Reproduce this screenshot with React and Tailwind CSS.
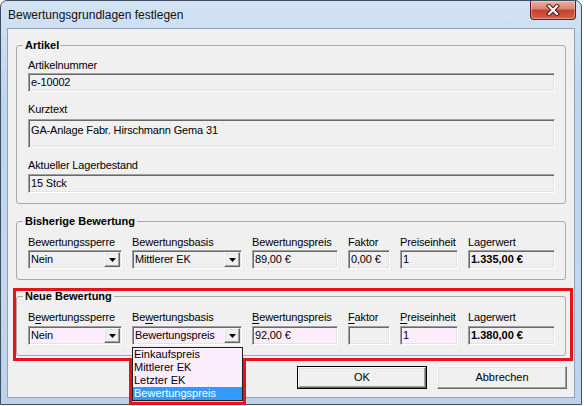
import React from 'react';

const sunken =
  'border border-t-[#a0a0a0] border-l-[#a0a0a0] border-r-white border-b-white shadow-[inset_1px_1px_0_#696969,inset_-1px_-1px_0_#e3e3e3]';
const raised =
  'border border-t-white border-l-white border-r-[#696969] border-b-[#696969] shadow-[inset_-1px_-1px_0_#a0a0a0,inset_1px_1px_0_#e3e3e3]';
const gray = 'bg-[#f0f0f0]';
const pink = 'bg-[#fdeefd]';

function Label({ children, className = '' }) {
  return <div className={`h-[14px] leading-[14px] whitespace-nowrap ${className}`}>{children}</div>;
}

function Box({ children, className = '', bg = gray, h = 'h-[19px] items-center' }) {
  return (
    <div className={`${sunken} ${bg} ${h} flex pl-[2px] whitespace-nowrap overflow-hidden ${className}`}>
      {children}
    </div>
  );
}

function Arrow() {
  return (
    <div className={`${raised} ${gray} w-[16px] flex items-center justify-center`}>
      <svg width="7" height="4" viewBox="0 0 7 4">
        <path d="M0 0H7L3.5 4Z" fill="#000" />
      </svg>
    </div>
  );
}

function Select({ value, bg = gray, children }) {
  return (
    <div className={`relative ${sunken} ${bg} h-[19px] p-[1px] flex`}>
      <div className="flex-1 pl-[1px] leading-[15px] whitespace-nowrap overflow-hidden">{value}</div>
      <Arrow />
      {children}
    </div>
  );
}

function Col({ label, w, children }) {
  return (
    <div className={`flex flex-col ${w}`}>
      {label}
      {children}
    </div>
  );
}

function Group({ title, children, className = '' }) {
  return (
    <fieldset className={`border border-[#a9a9a9] rounded-[3px] ${className}`}>
      <legend className="ml-[6px] px-[2px] h-[14px] leading-[14px] font-bold tracking-normal">{title}</legend>
      {children}
    </fieldset>
  );
}

function U({ children }) {
  return <span className="underline underline-offset-[2px]">{children}</span>;
}

function Button({ children, isDefault }) {
  const inner = (
    <div className={`${raised} ${gray} h-full flex items-center justify-center`}>{children}</div>
  );
  return isDefault ? (
    <div className="w-[130px] h-[23px] border border-black">{inner}</div>
  ) : (
    <div className="w-[130px] h-[23px]">{inner}</div>
  );
}

const items = ['Einkaufspreis', 'Mittlerer EK', 'Letzter EK', 'Bewertungspreis'];

export default function App() {
  return (
    <div className="w-[584px] h-[406px] bg-white font-['Liberation_Sans',Arial,sans-serif] text-[11px] tracking-[-0.15px] text-black">
      <div className="w-[582px] h-[405px] border border-[#3d4e60] rounded-t-[7px] bg-[linear-gradient(180deg,#d3e3f4,#bed5ed_25%,#c3d8ee_70%,#bcd2ea)] flex flex-col px-[6px] pb-[6px]">
        {/* title bar */}
        <div className="h-[27px] flex items-start shrink-0">
          <div className="pt-[7px] pl-[1px] text-[12px] leading-[14px] tracking-normal text-[#111]">
            Bewertungsgrundlagen festlegen
          </div>
          <div className="ml-auto mr-[-1px] w-[46px] h-[19px] rounded-b-[4px] border border-t-0 border-[#5b1e16] bg-[linear-gradient(#eab1a3,#d98372_45%,#c2412c_50%,#d6614a)] flex items-center justify-center shadow-[inset_0_0_0_1px_rgba(255,255,255,0.35)]">
            <svg width="14" height="12" viewBox="0 0 14 12">
              <path d="M3 2L11 10M11 2L3 10" stroke="#4a1a14" strokeWidth="4.2" strokeLinecap="square" />
              <path d="M3 2L11 10M11 2L3 10" stroke="#fff" strokeWidth="2.2" strokeLinecap="square" />
            </svg>
          </div>
        </div>

        {/* client area */}
        <div className="flex-1 border border-[#8ea3b8] bg-[#f0f0f0] flex flex-col px-[8px]">
          <Group title="Artikel" className="mt-[9px]">
            <div className="flex flex-col pl-[11px] pr-[10px] pt-[6px] pb-[10px]">
              <Label>Artikelnummer</Label>
              <Box className="mt-[1px]">e-10002</Box>
              <Label className="mt-[10px]">Kurztext</Label>
              <Box className="mt-[3px]" h="h-[29px] items-start pt-[2px]">
                GA-Anlage Fabr. Hirschmann Gema 31
              </Box>
              <Label className="mt-[10px]">Aktueller Lagerbestand</Label>
              <Box className="mt-[2px]">15 Stck</Box>
            </div>
          </Group>

          <Group title="Bisherige Bewertung" className="mt-[10px]">
            <div className="flex gap-[10px] pl-[11px] pt-[7px] pb-[10px]">
              <Col w="w-[94px]" label={<Label>Bewertungssperre</Label>}>
                <div className="mt-[1px]"><Select value="Nein" /></div>
              </Col>
              <Col w="w-[110px]" label={<Label>Bewertungsbasis</Label>}>
                <div className="mt-[1px]"><Select value="Mittlerer EK" /></div>
              </Col>
              <Col w="w-[86px]" label={<Label>Bewertungspreis</Label>}>
                <Box className="mt-[1px]">89,00 €</Box>
              </Col>
              <Col w="w-[42px]" label={<Label>Faktor</Label>}>
                <Box className="mt-[1px]">0,00 €</Box>
              </Col>
              <Col w="w-[58px]" label={<Label>Preiseinheit</Label>}>
                <Box className="mt-[1px]">1</Box>
              </Col>
              <Col w="w-[87px]" label={<Label>Lagerwert</Label>}>
                <Box className="mt-[1px] font-bold tracking-normal">1.335,00 €</Box>
              </Col>
            </div>
          </Group>

          <div className="relative mt-[9px]">
            <Group title="Neue Bewertung">
              <div className="flex gap-[10px] pl-[11px] pt-[7px] pb-[10px]">
                <Col w="w-[94px]" label={<Label>B<U>e</U>wertungssperre</Label>}>
                  <div className="mt-[2px]"><Select value="Nein" bg={pink} /></div>
                </Col>
                <Col w="w-[110px]" label={<Label>Be<U>w</U>ertungsbasis</Label>}>
                  <div className="mt-[2px]">
                    <Select value="Bewertungspreis" bg={pink}>
                      <div className="absolute left-[-4px] top-[32px] w-[117px] h-[46px] border-[3px] border-t-0 border-[#e8121c] z-10 pointer-events-none" />
                      <div className="absolute left-[-1px] top-[20px] w-[111px] border border-[#1e1e1e] bg-[#fdeefd] z-20 tracking-normal">
                        {items.map((it, i) => (
                          <div
                            key={it}
                            className={`h-[13px] leading-[13px] pl-[1px] whitespace-nowrap ${
                              i === 3 ? 'bg-[#3399ff] text-white' : ''
                            }`}
                          >
                            {it}
                          </div>
                        ))}
                      </div>
                    </Select>
                  </div>
                </Col>
                <Col w="w-[86px]" label={<Label><U>B</U>ewertungspreis</Label>}>
                  <Box className="mt-[2px]" bg={pink}>92,00 €</Box>
                </Col>
                <Col w="w-[42px]" label={<Label><U>F</U>aktor</Label>}>
                  <Box className="mt-[2px]"></Box>
                </Col>
                <Col w="w-[58px]" label={<Label><U>P</U>reiseinheit</Label>}>
                  <Box className="mt-[2px]" bg={pink}>1</Box>
                </Col>
                <Col w="w-[87px]" label={<Label>Lagerwert</Label>}>
                  <Box className="mt-[2px] font-bold tracking-normal">1.380,00 €</Box>
                </Col>
              </div>
            </Group>
            <div className="absolute left-[-3px] top-[-1px] right-[-7px] bottom-[-5px] border-[3px] border-[#e8121c] z-10 pointer-events-none" />
          </div>

          <div className="flex justify-end gap-[10px] mt-[10px] mr-[-1px] tracking-normal">
            <Button isDefault>OK</Button>
            <Button>Abbrechen</Button>
          </div>
        </div>
      </div>
    </div>
  );
}
